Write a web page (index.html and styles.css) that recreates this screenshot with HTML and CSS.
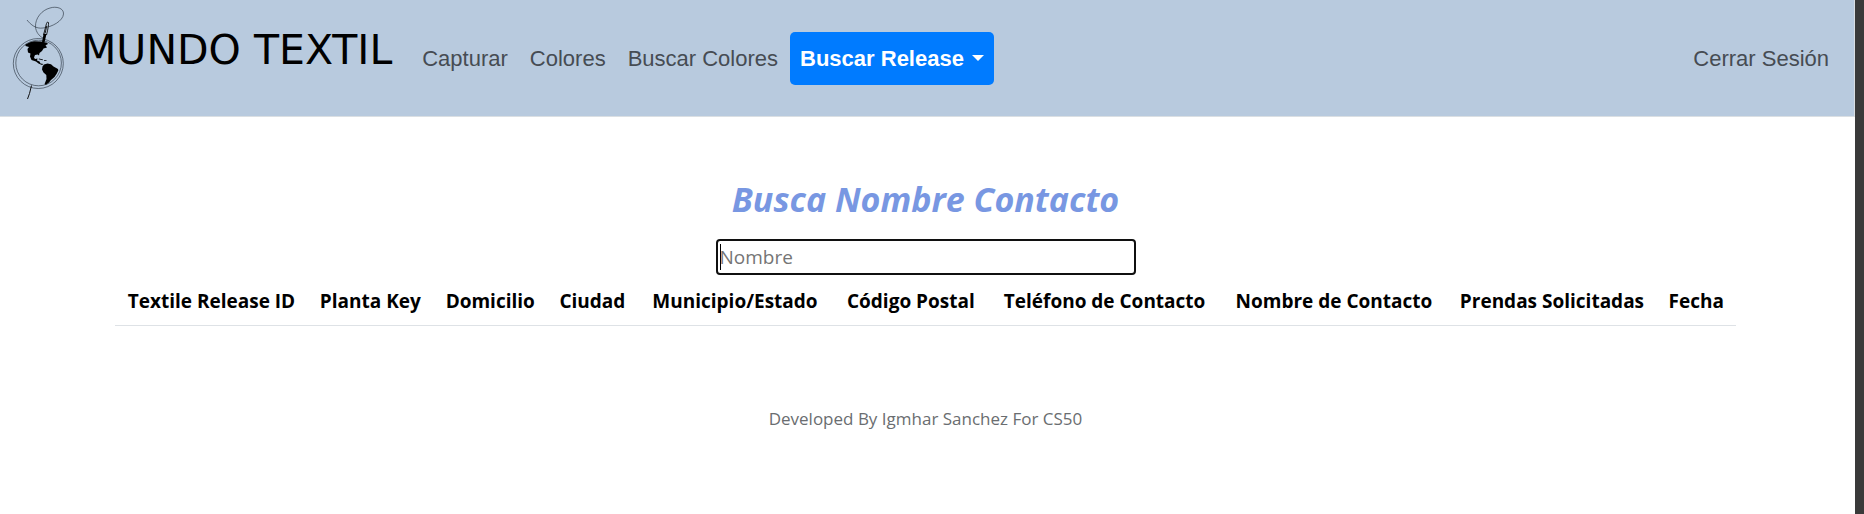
FILE: index.html
```html
<!DOCTYPE html>
<html lang="es">
<head>
<meta charset="utf-8">
<meta name="viewport" content="width=device-width, initial-scale=1">
<title>Mundo Textil</title>
<link rel="stylesheet" href="styles.css">
</head>
<body>
<div class="page">
  <nav class="navbar">
    <a class="brand" href="#">
      <svg class="logo" viewBox="10 4 58 98" width="58" height="98" aria-hidden="true">
        <g fill="none" stroke="#222c38" stroke-width=".6">
          <circle cx="38.3" cy="63.500" r="25"/>
          <circle cx="38.600" cy="63" r="22.800"/>
          <path d="M27 20C31 25 36 29 43 28C52 27 63 21 63.500 14C64 8 56 6 50 8C42 10 35 18 35.500 27C36 32 39 36 43 38"/>
          <path stroke="#111" stroke-width=".9" d="M43.500 35L46.500 23.500Q47.500 21 48.500 22.500Q48.800 26 46.500 35M46.700 26L45.200 33"/>
        </g>
        <path d="M31.500 85.500l-2 8-2 5.500" fill="none" stroke="#111"/>
        <path d="M43.700 33.500l2.800.5-2 8.500-2.500-.5z"/>
        <path d="M25.500 44.500L30 42.300L34 41.300L41 41.500L47 42.800L48 44L45.500 45.200L47 47.500L43.500 48.500L42 51L39.500 53L39 55.500L37.800 54.500L35 55L34 57.500L35 59L37.500 58.500L37 60.500L39.500 61.500L40.500 63.500L43.500 64L42 65L38.500 63.500L36 61.500L31.500 60L30 56.500L30.500 53.500L28 52.500L27.500 49L29 47L25.500 46z"/>
        <path d="M39 58.500l4 1-.3.700-4-1zM44 60l2.500.3v.7l-2.500-.3z"/>
        <path d="M42.500 66.500L44 64.500L47.500 63.500L51 64.300L53.500 66.500L58 69L58.300 70.500L56.500 74L54.500 77L51 80L49 82.500L46 84.800L44.500 84.300L46.500 79L46.300 75L43.500 72.500L42 69.500z"/>
      </svg>
      <span class="brand-name">MUNDO TEXTIL</span>
    </a>
    <div class="links">
      <a class="link" href="#">Capturar</a>
      <a class="link" href="#">Colores</a>
      <a class="link" href="#">Buscar Colores</a>
      <button class="dropdown" type="button" aria-haspopup="true">Buscar Release<span class="caret"></span></button>
    </div>
    <a class="link logout" href="#">Cerrar Sesión</a>
  </nav>
  <main class="content">
    <h1 class="title"><label for="nombre">Busca Nombre Contacto</label></h1>
    <input class="search" id="nombre" type="text" placeholder="Nombre" autocomplete="off" autofocus>
    <table class="results">
      <colgroup>
        <col class="c-id"><col class="c-key"><col class="c-address"><col class="c-city"><col class="c-state">
        <col class="c-zip"><col class="c-phone"><col class="c-name"><col class="c-items"><col class="c-date">
      </colgroup>
      <thead>
        <tr>
          <th>Textile Release ID</th><th>Planta Key</th><th>Domicilio</th><th>Ciudad</th><th>Municipio/Estado</th>
          <th>Código Postal</th><th>Teléfono de Contacto</th><th>Nombre de Contacto</th><th>Prendas Solicitadas</th><th>Fecha</th>
        </tr>
      </thead>
    </table>
  </main>
  <footer class="footer">Developed By Igmhar Sanchez For CS50</footer>
</div>
</body>
</html>
```
FILE: styles.css
```css
* { box-sizing: border-box; }
body {
  margin: 0;
  background: #fff;
  color: #000;
  font-family: "Open Sans", "Noto Sans", sans-serif;
}
.page {
  min-height: 100vh;
  border-right: 9px solid #3a3a3a;
}
.navbar {
  display: flex;
  align-items: center;
  padding: 4px 15px 14px 10px;
  background: #b8cade;
  border: solid #dadfe3;
  border-width: 0 1px 1px 0;
  font-family: "Liberation Sans", Arial, sans-serif;
  font-size: 22px;
}
.brand {
  display: flex;
  gap: 13px;
  color: #000;
  text-decoration: none;
}
.logo { display: block; }
.brand-name {
  padding-top: 22px;
  font-family: Verdana, "DejaVu Sans", sans-serif;
  font-size: 41px;
  line-height: 48px;
}
.links {
  display: flex;
  align-items: center;
  gap: 2px;
  margin-left: 20px;
  padding-top: 10px;
}
.link {
  padding: 10px;
  color: #464c53;
  line-height: 33px;
  text-decoration: none;
}
.logout {
  margin-left: auto;
  padding-top: 20px;
}
.dropdown {
  display: flex;
  align-items: center;
  gap: 8px;
  padding: 10px;
  border: 0;
  border-radius: 5px;
  background: #007bff;
  color: #fff;
  font: bold 22px/33px "Liberation Sans", Arial, sans-serif;
}
.caret {
  border: 6px solid transparent;
  border-top-color: #fff;
  border-bottom: 0;
}
.content {
  display: flex;
  flex-direction: column;
  align-items: center;
  padding: 60px 119px 0 115px;
}
.title {
  margin: 0;
  color: #7897e2;
  font-size: 34px;
  font-style: italic;
  font-weight: 700;
  line-height: 44px;
}
.search {
  width: 420px;
  max-width: 100%;
  height: 36px;
  margin-top: 18px;
  padding: 0 2px;
  border: 2px solid #101010;
  border-radius: 4px;
  outline: 0;
  color: #000;
  font: 19px "Open Sans", "Noto Sans", sans-serif;
}
.search::placeholder { color: #757575; }
.search:placeholder-shown {
  background: linear-gradient(#000, #000) 2px center / 1px 26px no-repeat #fff;
}
.results {
  width: 100%;
  margin-top: 10px;
  border-collapse: collapse;
  font-size: 19px;
  line-height: 28px;
}
.results th {
  padding: 2px 0 10px;
  border-bottom: 1px solid #dee2e6;
  white-space: nowrap;
}
.c-id { width: 11.9%; }
.c-key { width: 7.7%; }
.c-address { width: 7.1%; }
.c-city { width: 5.5%; }
.c-state { width: 12.1%; }
.c-zip { width: 9.6%; }
.c-phone { width: 14.3%; }
.c-name { width: 14%; }
.c-items { width: 12.9%; }
.c-date { width: 4.9%; }
.footer {
  padding: 80px 4px 0 0;
  color: #6a6d70;
  font-size: 17px;
  line-height: 26px;
  text-align: center;
}
```
